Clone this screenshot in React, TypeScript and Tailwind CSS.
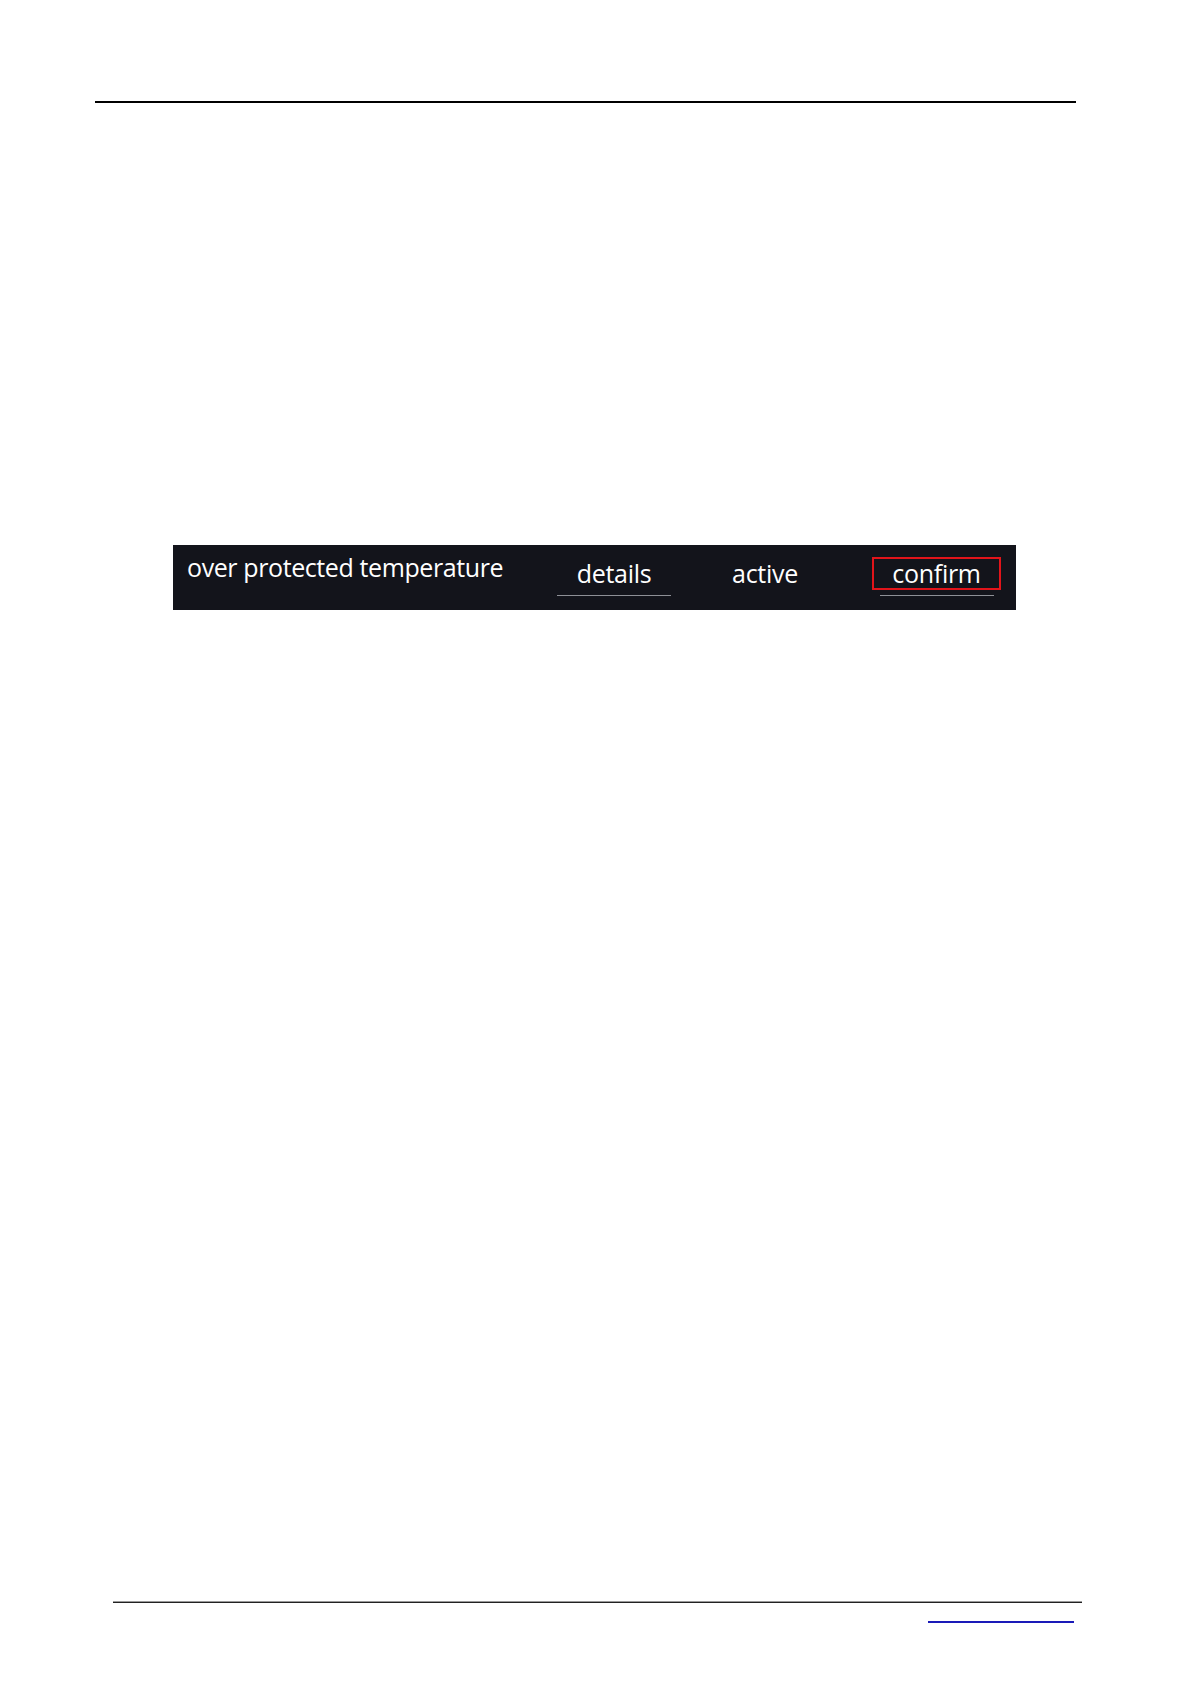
import React from "react";

export default function App() {
  const font = { fontFamily: '"Open Sans", "Noto Sans", sans-serif' };
  return (
    <div className="w-[1191px] h-[1684px] bg-white flex flex-col" style={font}>
      <div className="mt-[101px] ml-[95px] w-[981px] h-[2px] bg-black" />
      <div className="mt-[442px] ml-[173px] w-[843px] h-[65px] bg-[#13141b] flex items-start text-white font-medium">
        <div className="ml-[14px] w-[370px] pt-[5px] text-[25px] leading-[34px] tracking-[-0.4px] whitespace-nowrap">
          over protected temperature
        </div>
        <div className="mt-[10px] w-[114px] h-[41px] flex flex-col items-center">
          <div className="h-[40px] pt-[1px] text-[25px] leading-[34px] tracking-[-0.3px]">details</div>
          <div className="w-full h-[1px] bg-[#8e9096]" />
        </div>
        <div className="ml-[37px] mt-[11px] w-[114px] flex flex-col items-center">
          <div className="h-[40px] text-[25px] leading-[34px] tracking-[-0.3px]">active</div>
        </div>
        <div className="ml-[50px] mt-[12px] w-[129px] flex flex-col items-center">
          <div className="w-[129px] h-[33px] border-2 border-[#e2141a] flex items-start justify-center text-[25px] leading-[28px] tracking-[-0.3px]">
            confirm
          </div>
          <div className="mt-[5px] w-[114px] h-[1px] bg-[#8e9096]" />
        </div>
      </div>
      <div className="mt-[991px] ml-[113px] w-[969px] h-[2px] bg-[#222] border-t border-[#999]" />
      <div className="mt-[18px] ml-[928px] w-[146px] h-[2px] bg-[#1a1ab8]" />
    </div>
  );
}
